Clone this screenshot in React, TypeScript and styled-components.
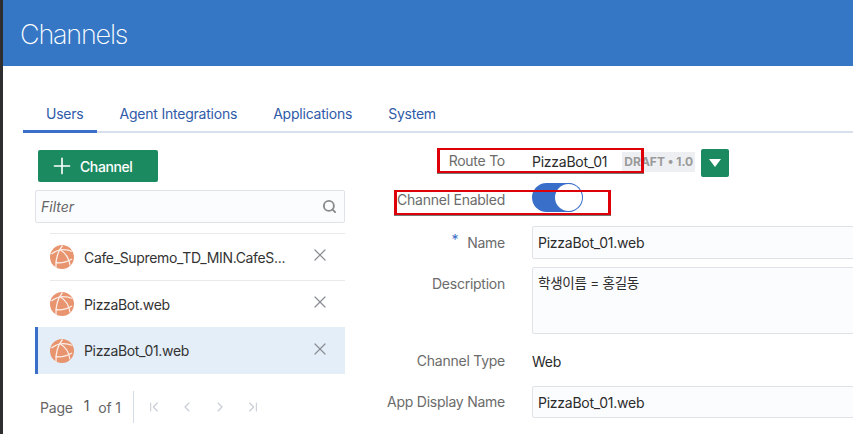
import { createGlobalStyle, styled } from 'styled-components'
import { ChevronFirst, ChevronLast, ChevronLeft, ChevronRight, Plus, Search, X } from 'lucide-react'

const tabs = ['Users', 'Agent Integrations', 'Applications', 'System']
const channels = ['Cafe_Supremo_TD_MIN.CafeS...', 'PizzaBot.web', 'PizzaBot_01.web']

function ChannelIcon() {
  return (
    <svg width="24" height="24" viewBox="0 0 24 24">
      <circle cx="12" cy="12" r="12" fill="#e8946f" />
      <g fill="none" stroke="#fbeee8" strokeWidth="1.3">
        <path d="M1.5 9C7 4.5 15 3.5 22.5 6.5" />
        <path d="M12.5 0.5C8 6 5.5 12 6 23" />
        <path d="M10.5 5C15.5 8 19 13 20 20.5" />
        <path d="M5.5 17.5C10 18.5 15 18 22 14" />
      </g>
    </svg>
  )
}

export default function App() {
  return (
    <>
      <GlobalStyle />
      <Page>
        <Strip />
        <Content>
          <Header>
            <Title>Channels</Title>
          </Header>
          <TabBar>
            {tabs.map((tab, i) => (
              <Tab key={tab} $active={i === 0}>
                {tab}
              </Tab>
            ))}
          </TabBar>
          <Main>
            <Sidebar>
              <AddButton>
                <Plus size={26} strokeWidth={1.5} />
                Channel
              </AddButton>
              <FilterBox>
                <FilterText>Filter</FilterText>
                <Search size={15} strokeWidth={3} color="#8a8a8a" />
              </FilterBox>
              <ChannelList>
                {channels.map((name, i) => (
                  <ChannelRow key={name} $selected={i === 2}>
                    <ChannelIcon />
                    <ChannelName>{name}</ChannelName>
                    <RemoveIcon>
                      <X size={20} strokeWidth={1.5} />
                    </RemoveIcon>
                  </ChannelRow>
                ))}
              </ChannelList>
              <Pager>
                <PagerLabel>Page</PagerLabel>
                <PagerCurrent>1</PagerCurrent>
                <PagerLabel>of 1</PagerLabel>
                <PagerDivider />
                <PagerIcons>
                  <ChevronFirst size={16} strokeWidth={1.6} />
                  <ChevronLeft size={16} strokeWidth={1.6} />
                  <ChevronRight size={16} strokeWidth={1.6} />
                  <ChevronLast size={16} strokeWidth={1.6} />
                </PagerIcons>
              </Pager>
            </Sidebar>
            <Form>
              <RouteRow>
                <Label>Route To</Label>
                <Value>PizzaBot_01</Value>
                <Badge>DRAFT • 1.0</Badge>
                <DropButton>
                  <Triangle />
                </DropButton>
              </RouteRow>
              <FormRow $height={29} $top={10}>
                <Label $shift={2}>Channel Enabled</Label>
                <Toggle>
                  <Knob />
                </Toggle>
              </FormRow>
              <FormRow $height={33} $top={14}>
                <Label>
                  <Required>*</Required>Name
                </Label>
                <Input>PizzaBot_01.web</Input>
              </FormRow>
              <FormRow $height={67} $top={8} $alignTop>
                <Label>Description</Label>
                <TextArea>학생이름 = 홍길동</TextArea>
              </FormRow>
              <FormRow $height={32} $top={11}>
                <Label>Channel Type</Label>
                <Value>Web</Value>
              </FormRow>
              <FormRow $height={32} $top={9}>
                <Label>App Display Name</Label>
                <Input>PizzaBot_01.web</Input>
              </FormRow>
            </Form>
          </Main>
        </Content>
        <Highlight $left={437} $top={148} $width={207} $height={25} />
        <Highlight $left={394} $top={190} $width={217} $height={25} />
      </Page>
    </>
  )
}

const GlobalStyle = createGlobalStyle`
  html, body {
    margin: 0;
    background: #fff;
    font-family: Inter, "Noto Sans CJK KR", sans-serif;
  }
`

const Page = styled.div`
  position: relative;
  display: flex;
  width: 853px;
  height: 434px;
  overflow: hidden;
`

const Strip = styled.div`
  flex: 0 0 3px;
  background: #2e2e30;
`

const Content = styled.div`
  flex: 1;
  min-width: 0;
`

const Header = styled.div`
  display: flex;
  align-items: center;
  height: 66px;
  padding: 2px 0 0 17px;
  box-sizing: border-box;
  background: #3577c5;
`

const Title = styled.div`
  color: #fff;
  font-size: 27px;
  font-weight: 200;
  letter-spacing: -1.2px;
`

const TabBar = styled.div`
  display: flex;
  height: 67px;
  margin-left: 20px;
  align-items: flex-end;
  border-bottom: 2px solid #d9e0ec;
  box-sizing: border-box;
`

const Tab = styled.div<{ $active?: boolean }>`
  padding: 0 13px 8px 23px;
  margin-bottom: -2px;
  color: #2f5ba8;
  font-size: 14px;
  letter-spacing: -0.22px;
  border-bottom: 3px solid ${({ $active }) => ($active ? '#3a6fc9' : 'transparent')};
`

const Main = styled.div`
  display: flex;
  padding-top: 16px;
`

const Sidebar = styled.div`
  flex: 0 0 310px;
  margin-left: 32px;
`

const AddButton = styled.div`
  display: flex;
  align-items: center;
  gap: 5px;
  width: 120px;
  height: 32px;
  margin: 1px 0 0 3px;
  padding-left: 11px;
  box-sizing: border-box;
  background: #1c8a60;
  border-radius: 2px;
  color: #fff;
  font-size: 14px;
  font-weight: 500;
  letter-spacing: -0.4px;
`

const FilterBox = styled.div`
  display: flex;
  align-items: center;
  justify-content: space-between;
  height: 33px;
  margin-top: 8px;
  padding: 0 7px 0 5px;
  box-sizing: border-box;
  background: #fbfcfe;
  border: 1px solid #dfe3e8;
  border-radius: 2px;
`

const FilterText = styled.span`
  color: #666;
  font-size: 14px;
  font-style: italic;
`

const ChannelList = styled.div`
  margin-top: 10px;
`

const ChannelRow = styled.div<{ $selected?: boolean }>`
  display: flex;
  align-items: center;
  height: 47px;
  margin-left: ${({ $selected }) => ($selected ? 0 : 15)}px;
  padding-left: ${({ $selected }) => ($selected ? 12 : 0)}px;
  box-sizing: border-box;
  background: ${({ $selected }) => ($selected ? '#e4eef8' : 'transparent')};
  border-top: ${({ $selected }) => ($selected ? 'none' : '1px solid #e8e9ea')};
  border-left: ${({ $selected }) => ($selected ? '3px solid #3a6fc9' : 'none')};
`

const ChannelName = styled.span`
  flex: 1;
  margin-left: 10px;
  color: #333;
  font-size: 14px;
  letter-spacing: -0.34px;
`

const RemoveIcon = styled.span`
  display: flex;
  margin: -4px 15px 0 0;
  color: #8b8f94;
`

const Pager = styled.div`
  display: flex;
  align-items: center;
  height: 32px;
  margin-top: 17px;
  padding-left: 5px;
  color: #666;
  font-size: 14px;
  letter-spacing: -0.2px;
`

const PagerLabel = styled.span`
  color: #666;
`

const PagerCurrent = styled.span`
  margin: -3px 9px 0 11px;
  color: #555;
`

const PagerDivider = styled.div`
  width: 1px;
  height: 32px;
  margin-left: 12px;
  background: #d3dbe6;
`

const PagerIcons = styled.div`
  display: flex;
  gap: 17px;
  margin-left: 12px;
  color: #c6ccd4;
`

const Form = styled.div`
  flex: 0 0 auto;
`

const FormRow = styled.div<{ $height: number; $top?: number; $alignTop?: boolean }>`
  display: flex;
  align-items: ${({ $alignTop }) => ($alignTop ? 'flex-start' : 'center')};
  height: ${({ $height }) => $height}px;
  margin-top: ${({ $top }) => $top ?? 0}px;
`

const RouteRow = styled.div`
  display: flex;
  align-items: center;
  height: 24px;
`

const Label = styled.div<{ $shift?: number }>`
  flex: 0 0 160px;
  margin: ${({ $shift }) => ($shift ?? 0) * 2}px 27px 0 0;
  color: #6b6b6b;
  font-size: 14px;
  letter-spacing: -0.25px;
  text-align: right;
  white-space: nowrap;
  line-height: 34px;
`

const Required = styled.span`
  margin-right: 9px;
  color: #3a6fc9;
  line-height: 0;
  vertical-align: 3px;
`

const Value = styled.div`
  color: #2b2b2b;
  font-size: 14px;
  letter-spacing: -0.25px;
`

const Badge = styled.div`
  flex: 0 0 73px;
  box-sizing: border-box;
  margin: 2px 0 0 15px;
  padding-left: 2px;
  height: 20px;
  line-height: 20px;
  background: #eeeff2;
  color: #9a9a9a;
  font-size: 12px;
  font-weight: 700;
  white-space: nowrap;
`

const DropButton = styled.div`
  display: flex;
  align-items: center;
  justify-content: center;
  align-self: flex-start;
  flex: 0 0 28px;
  height: 28px;
  margin-left: 6px;
  background: #1c8a60;
  border-radius: 2px;
`

const Triangle = styled.div`
  border-left: 6px solid transparent;
  border-right: 6px solid transparent;
  border-top: 8px solid #fff;
`

const Toggle = styled.div`
  display: flex;
  justify-content: flex-end;
  width: 50px;
  height: 29px;
  box-sizing: border-box;
  background: #3a6fc9;
  border-radius: 15px;
`

const Knob = styled.div`
  width: 27px;
  height: 27px;
  margin: 1px 0;
  background: #fff;
  border-radius: 50%;
  box-shadow: 0 0 0 1px #3a6fc9;
`

const Input = styled.div`
  width: 400px;
  height: 100%;
  padding-left: 5px;
  box-sizing: border-box;
  display: flex;
  align-items: center;
  background: #fbfcfe;
  border: 1px solid #dfe3e8;
  border-radius: 2px;
  color: #2b2b2b;
  font-size: 14px;
  letter-spacing: -0.25px;
`

const TextArea = styled(Input)`
  align-items: flex-start;
  padding-top: 7px;
  font-size: 13.5px;
  line-height: 17px;
`

const Highlight = styled.div<{ $left: number; $top: number; $width: number; $height: number }>`
  position: absolute;
  left: ${({ $left }) => $left}px;
  top: ${({ $top }) => $top}px;
  width: ${({ $width }) => $width}px;
  height: ${({ $height }) => $height}px;
  box-sizing: border-box;
  border-style: solid;
  border-width: 2px 3px;
  border-color: #dd0008;
  box-shadow: 0 1px 0 #777;
`
